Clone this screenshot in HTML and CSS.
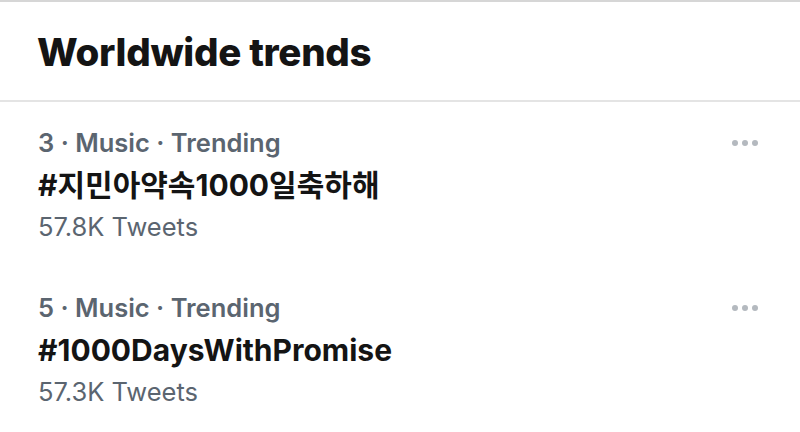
FILE: index.html
```html
<!DOCTYPE html>
<html lang="en">
<head>
<meta charset="utf-8">
<link rel="stylesheet" href="styles.css">
</head>
<body>
<div class="panel">
  <header class="header"><h1 class="title">Worldwide trends</h1></header>
  <div class="list">
    <div class="trend">
      <div class="trend-text">
        <div class="meta">3 · Music · Trending</div>
        <div class="tag">#지민아약속1000일축하해</div>
        <div class="count">57.8K Tweets</div>
      </div>
      <div class="more"><span></span><span></span><span></span></div>
    </div>
    <div class="trend">
      <div class="trend-text">
        <div class="meta">5 · Music · Trending</div>
        <div class="tag">#1000DaysWithPromise</div>
        <div class="count">57.3K Tweets</div>
      </div>
      <div class="more"><span></span><span></span><span></span></div>
    </div>
  </div>
</div>
</body>
</html>
```
FILE: styles.css
```css
html, body {
  margin: 0;
  padding: 0;
  background: #ffffff;
}
body {
  font-family: Inter, "Noto Sans CJK KR", "Liberation Sans", sans-serif;
  color: #0f1419;
}
.panel {
  width: 800px;
  height: 432px;
  overflow: hidden;
  border-top: 2px solid #d6d6d6;
  box-sizing: border-box;
}
.header {
  height: 98px;
  display: flex;
  align-items: center;
  padding-left: 37px;
  border-bottom: 2px solid #e4e4e4;
}
.title {
  margin: 0;
  font-size: 38.5px;
  font-weight: 800;
  letter-spacing: -0.3px;
  color: #141414;
  position: relative;
  top: 1px;
}
.trend {
  display: flex;
  justify-content: space-between;
  padding: 20px 38px 19px 38px;
}
.trend-text {
  display: flex;
  flex-direction: column;
}
.meta, .tag, .count {
  height: 42px;
  line-height: 42px;
  white-space: nowrap;
}
.meta {
  font-size: 25.5px;
  font-weight: 600;
  color: #5b6570;
}
.tag {
  font-size: 30px;
  font-weight: 700;
  color: #141414;
}
.count {
  font-size: 25.5px;
  font-weight: 400;
  color: #5b6570;
}
.more {
  display: flex;
  gap: 4px;
  height: 42px;
  align-items: center;
  padding-right: 4px;
}
.more span {
  width: 6px;
  height: 6px;
  border-radius: 50%;
  background: #b4b9bf;
}
```
